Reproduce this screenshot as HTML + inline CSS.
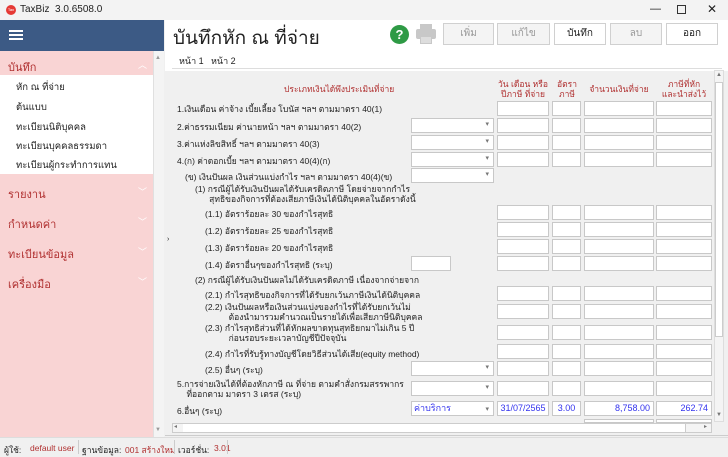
<!DOCTYPE html>
<html><head><meta charset="utf-8"><style>
*{box-sizing:border-box;margin:0;padding:0}
body{width:728px;height:457px;overflow:hidden;background:#f0f0f0;font-family:"Liberation Sans","DejaVu Sans",sans-serif;font-size:9px;color:#222;position:relative}
.a{position:absolute;white-space:nowrap}
.l{font-size:8.5px}
.in{position:absolute;height:15px;background:#fff;border:1px solid #c8c8c8}
.dd::after{content:"▾";position:absolute;right:4px;top:1px;font-size:7px;color:#777}
.hd{color:#b03030;text-align:center;font-size:8.5px;line-height:10px}
.btn{position:absolute;top:23px;height:22px;border:1px solid #d0d0d0;background:#f4f4f4;color:#999;text-align:center;line-height:20px;font-size:10px}
.side{position:absolute;left:16px;font-size:9.5px;color:#222}
.grp{position:absolute;left:8px;font-size:11px;color:#b03030}
.chev{position:absolute;left:138px;color:#fff;font-size:9px}
.blue{color:#3333ee}
</style></head><body>
<div class="a" style="left:0;top:0;width:728px;height:20px;background:#f3f3f3"></div>
<div class="a" style="left:6px;top:5px;width:10px;height:10px;border-radius:50%;background:#e53935;color:#fff;font-size:4px;line-height:10px;text-align:center">Tax</div>
<div class="a" style="left:20px;top:4px;font-size:10px">TaxBiz&nbsp; 3.0.6508.0</div>
<div class="a" style="left:650px;top:3px;font-size:11px">—</div>
<div class="a" style="left:677px;top:5px;width:9px;height:9px;border:1px solid #333"></div>
<div class="a" style="left:707px;top:2px;font-size:12px">✕</div>
<div class="a" style="left:0;top:20px;width:164px;height:31px;background:#3c5a85"></div>
<div class="a" style="left:9px;top:30px;width:14px;height:2px;background:#fff;box-shadow:0 4px 0 #fff,0 8px 0 #fff"></div>
<div class="a" style="left:0;top:51px;width:153px;height:386px;background:#f9d4d4"></div>
<div class="a" style="left:153px;top:51px;width:11px;height:386px;background:#f4f4f4;border-left:1px solid #e0e0e0"></div>
<div class="a" style="left:155px;top:55px;font-size:6px;color:#999">▲</div>
<div class="a" style="left:155px;top:427px;font-size:6px;color:#999">▼</div>
<div class="a" style="left:0;top:75px;width:153px;height:99px;background:#fff"></div>
<div class="grp a" style="top:58px">บันทึก</div><div class="chev a" style="top:58px">︿</div>
<div class="side a" style="top:80px">หัก ณ ที่จ่าย</div>
<div class="side a" style="top:100px">ต้นแบบ</div>
<div class="side a" style="top:120px">ทะเบียนนิติบุคคล</div>
<div class="side a" style="top:139px">ทะเบียนบุคคลธรรมดา</div>
<div class="side a" style="top:158px">ทะเบียนผู้กระทำการแทน</div>
<div class="grp a" style="top:185px">รายงาน</div><div class="chev a" style="top:185px">﹀</div>
<div class="grp a" style="top:215px">กำหนดค่า</div><div class="chev a" style="top:215px">﹀</div>
<div class="grp a" style="top:245px">ทะเบียนข้อมูล</div><div class="chev a" style="top:245px">﹀</div>
<div class="grp a" style="top:275px">เครื่องมือ</div><div class="chev a" style="top:275px">﹀</div>
<div class="a" style="left:165px;top:20px;width:563px;height:31px;background:#fff"></div>
<div class="a" style="left:173px;top:23px;font-size:19px;color:#222">บันทึกหัก ณ ที่จ่าย</div>
<div class="a" style="left:390px;top:25px;width:19px;height:19px;border-radius:50%;background:#2e9a45;color:#fff;font-weight:bold;font-size:13px;text-align:center;line-height:19px">?</div>
<div class="a" style="left:420px;top:24px;width:12px;height:5px;background:#c8c8c8"></div>
<div class="a" style="left:416px;top:29px;width:20px;height:10px;background:#c8c8c8;border-radius:2px"></div>
<div class="a" style="left:420px;top:36px;width:12px;height:8px;background:#ddd;border:1px solid #c8c8c8"></div>
<div class="btn" style="left:443px;width:51px">เพิ่ม</div>
<div class="btn" style="left:497px;width:53px">แก้ไข</div>
<div class="btn" style="left:554px;width:52px;background:#fff;color:#222">บันทึก</div>
<div class="btn" style="left:610px;width:52px">ลบ</div>
<div class="btn" style="left:666px;width:52px;background:#fff;color:#222">ออก</div>
<div class="a" style="left:165px;top:51px;width:563px;height:20px;background:#fff"></div>
<div class="a" style="left:179px;top:54px">หน้า 1</div>
<div class="a" style="left:211px;top:54px">หน้า 2</div>
<div class="a" style="left:172px;top:68px;width:550px;height:1px;background:#ddd"></div>
<div class="a" style="left:167px;top:236px;font-size:7px">›</div>
<div class="a hd" style="left:284px;top:84px">ประเภทเงินได้พึงประเมินที่จ่าย</div>
<div class="a hd" style="left:496px;top:79px;width:54px">วัน เดือน หรือ<br>ปีภาษี ที่จ่าย</div>
<div class="a hd" style="left:552px;top:79px;width:30px">อัตรา<br>ภาษี</div>
<div class="a hd" style="left:584px;top:84px;width:70px">จำนวนเงินที่จ่าย</div>
<div class="a hd" style="left:656px;top:79px;width:56px">ภาษีที่หัก<br>และนำส่งไว้</div>
<div class="a" style="left:714px;top:70px;width:10px;height:352px;background:#f4f4f4;border:1px solid #ddd"></div>
<div class="a" style="left:715px;top:82px;width:8px;height:255px;background:#fff;border:1px solid #ccc"></div>
<div class="a" style="left:716px;top:72px;font-size:6px;color:#777">▲</div>
<div class="a" style="left:716px;top:412px;font-size:6px;color:#777">▼</div>
<div class="a" style="left:172px;top:423px;width:540px;height:10px;background:#f4f4f4;border:1px solid #ccc"></div>
<div class="a" style="left:183px;top:424px;width:503px;height:8px;background:#fff;border-right:1px solid #ccc"></div>
<div class="a" style="left:174px;top:423px;font-size:6px;color:#777">◂</div>
<div class="a" style="left:704px;top:423px;font-size:6px;color:#777">▸</div>
<div class="a" style="left:165px;top:435px;width:563px;height:1px;background:#ccc"></div>

<div class="a l" style="left:177px;top:102px">1.เงินเดือน ค่าจ้าง เบี้ยเลี้ยง โบนัส ฯลฯ ตามมาตรา 40(1)</div>
<div class="a l" style="left:177px;top:120px">2.ค่าธรรมเนียม ค่านายหน้า ฯลฯ ตามมาตรา 40(2)</div>
<div class="a l" style="left:177px;top:137px">3.ค่าแห่งลิขสิทธิ์ ฯลฯ ตามมาตรา 40(3)</div>
<div class="a l" style="left:177px;top:154px">4.(ก) ค่าดอกเบี้ย ฯลฯ ตามมาตรา 40(4)(ก)</div>
<div class="a l" style="left:185px;top:170px">(ข) เงินปันผล เงินส่วนแบ่งกำไร ฯลฯ ตามมาตรา 40(4)(ข)</div>
<div class="a l" style="left:195px;top:184px;line-height:10px">(1) กรณีผู้ได้รับเงินปันผลได้รับเครดิตภาษี โดยจ่ายจากกำไร<br>&nbsp;&nbsp;&nbsp;&nbsp;&nbsp;&nbsp;สุทธิของกิจการที่ต้องเสียภาษีเงินได้นิติบุคคลในอัตราดังนี้</div>
<div class="a l" style="left:205px;top:207px">(1.1) อัตราร้อยละ 30 ของกำไรสุทธิ</div>
<div class="a l" style="left:205px;top:224px">(1.2) อัตราร้อยละ 25 ของกำไรสุทธิ</div>
<div class="a l" style="left:205px;top:241px">(1.3) อัตราร้อยละ 20 ของกำไรสุทธิ</div>
<div class="a l" style="left:205px;top:258px">(1.4) อัตราอื่นๆของกำไรสุทธิ (ระบุ)</div>
<div class="a l" style="left:195px;top:273px">(2) กรณีผู้ได้รับเงินปันผลไม่ได้รับเครดิตภาษี เนื่องจากจ่ายจาก</div>
<div class="a l" style="left:205px;top:288px">(2.1) กำไรสุทธิของกิจการที่ได้รับยกเว้นภาษีเงินได้นิติบุคคล</div>
<div class="a l" style="left:205px;top:302px;line-height:10px">(2.2) เงินปันผลหรือเงินส่วนแบ่งของกำไรที่ได้รับยกเว้นไม่<br>&nbsp;&nbsp;&nbsp;&nbsp;&nbsp;&nbsp;&nbsp;&nbsp;&nbsp;&nbsp;ต้องนำมารวมคำนวณเป็นรายได้เพื่อเสียภาษีนิติบุคคล</div>
<div class="a l" style="left:205px;top:323px;line-height:10px">(2.3) กำไรสุทธิส่วนที่ได้หักผลขาดทุนสุทธิยกมาไม่เกิน 5 ปี<br>&nbsp;&nbsp;&nbsp;&nbsp;&nbsp;&nbsp;&nbsp;&nbsp;&nbsp;&nbsp;ก่อนรอบระยะเวลาบัญชีปีปัจจุบัน</div>
<div class="a l" style="left:205px;top:347px">(2.4) กำไรที่รับรู้ทางบัญชีโดยวิธีส่วนได้เสีย(equity method)</div>
<div class="a l" style="left:205px;top:363px">(2.5) อื่นๆ (ระบุ)</div>
<div class="a l" style="left:177px;top:379px;line-height:10px">5.การจ่ายเงินได้ที่ต้องหักภาษี ณ ที่จ่าย ตามคำสั่งกรมสรรพากร<br>&nbsp;&nbsp;&nbsp;&nbsp;ที่ออกตาม มาตรา 3 เตรส (ระบุ)</div>
<div class="a l" style="left:177px;top:404px">6.อื่นๆ (ระบุ)</div>

<div class="in" style="left:497px;top:101px;width:52px"></div><div class="in" style="left:552px;top:101px;width:29px"></div><div class="in" style="left:584px;top:101px;width:70px"></div><div class="in" style="left:656px;top:101px;width:56px"></div>
<div class="in dd" style="left:411px;top:118px;width:83px"></div><div class="in" style="left:497px;top:118px;width:52px"></div><div class="in" style="left:552px;top:118px;width:29px"></div><div class="in" style="left:584px;top:118px;width:70px"></div><div class="in" style="left:656px;top:118px;width:56px"></div>
<div class="in dd" style="left:411px;top:135px;width:83px"></div><div class="in" style="left:497px;top:135px;width:52px"></div><div class="in" style="left:552px;top:135px;width:29px"></div><div class="in" style="left:584px;top:135px;width:70px"></div><div class="in" style="left:656px;top:135px;width:56px"></div>
<div class="in dd" style="left:411px;top:152px;width:83px"></div><div class="in" style="left:497px;top:152px;width:52px"></div><div class="in" style="left:552px;top:152px;width:29px"></div><div class="in" style="left:584px;top:152px;width:70px"></div><div class="in" style="left:656px;top:152px;width:56px"></div>
<div class="in dd" style="left:411px;top:168px;width:83px"></div>
<div class="in" style="left:497px;top:205px;width:52px"></div><div class="in" style="left:552px;top:205px;width:29px"></div><div class="in" style="left:584px;top:205px;width:70px"></div><div class="in" style="left:656px;top:205px;width:56px"></div>
<div class="in" style="left:497px;top:222px;width:52px"></div><div class="in" style="left:552px;top:222px;width:29px"></div><div class="in" style="left:584px;top:222px;width:70px"></div><div class="in" style="left:656px;top:222px;width:56px"></div>
<div class="in" style="left:497px;top:239px;width:52px"></div><div class="in" style="left:552px;top:239px;width:29px"></div><div class="in" style="left:584px;top:239px;width:70px"></div><div class="in" style="left:656px;top:239px;width:56px"></div>
<div class="in" style="left:411px;top:256px;width:40px"></div><div class="in" style="left:497px;top:256px;width:52px"></div><div class="in" style="left:552px;top:256px;width:29px"></div><div class="in" style="left:584px;top:256px;width:70px"></div><div class="in" style="left:656px;top:256px;width:56px"></div>
<div class="in" style="left:497px;top:286px;width:52px"></div><div class="in" style="left:552px;top:286px;width:29px"></div><div class="in" style="left:584px;top:286px;width:70px"></div><div class="in" style="left:656px;top:286px;width:56px"></div>
<div class="in" style="left:497px;top:304px;width:52px"></div><div class="in" style="left:552px;top:304px;width:29px"></div><div class="in" style="left:584px;top:304px;width:70px"></div><div class="in" style="left:656px;top:304px;width:56px"></div>
<div class="in" style="left:497px;top:325px;width:52px"></div><div class="in" style="left:552px;top:325px;width:29px"></div><div class="in" style="left:584px;top:325px;width:70px"></div><div class="in" style="left:656px;top:325px;width:56px"></div>
<div class="in" style="left:497px;top:344px;width:52px"></div><div class="in" style="left:552px;top:344px;width:29px"></div><div class="in" style="left:584px;top:344px;width:70px"></div><div class="in" style="left:656px;top:344px;width:56px"></div>
<div class="in dd" style="left:411px;top:361px;width:83px"></div><div class="in" style="left:497px;top:361px;width:52px"></div><div class="in" style="left:552px;top:361px;width:29px"></div><div class="in" style="left:584px;top:361px;width:70px"></div><div class="in" style="left:656px;top:361px;width:56px"></div>
<div class="in dd" style="left:411px;top:381px;width:83px"></div><div class="in" style="left:497px;top:381px;width:52px"></div><div class="in" style="left:552px;top:381px;width:29px"></div><div class="in" style="left:584px;top:381px;width:70px"></div><div class="in" style="left:656px;top:381px;width:56px"></div>
<div class="in dd blue" style="left:411px;top:401px;width:83px;padding-left:2px;line-height:13px">ค่าบริการ</div>
<div class="in blue" style="left:497px;top:401px;width:52px;text-align:center;line-height:13px">31/07/2565</div>
<div class="in blue" style="left:552px;top:401px;width:29px;text-align:center;line-height:13px">3.00</div>
<div class="in blue" style="left:584px;top:401px;width:70px;text-align:right;padding-right:3px;line-height:13px">8,758.00</div>
<div class="in blue" style="left:656px;top:401px;width:56px;text-align:right;padding-right:3px;line-height:13px">262.74</div>
<div class="in" style="left:584px;top:419px;width:70px;height:4px"></div><div class="in" style="left:656px;top:419px;width:56px;height:4px"></div>

<div class="a" style="left:0;top:437px;width:728px;height:20px;background:#f0f0f0;border-top:1px solid #ddd"></div>
<div class="a l" style="left:4px;top:443px">ผู้ใช้:</div>
<div class="a l" style="left:30px;top:443px;color:#b03030">default user</div>
<div class="a" style="left:78px;top:440px;width:1px;height:14px;background:#ccc"></div>
<div class="a l" style="left:82px;top:443px">ฐานข้อมูล:</div>
<div class="a l" style="left:125px;top:443px;color:#b03030">001 สร้างใหม่</div>
<div class="a" style="left:174px;top:440px;width:1px;height:14px;background:#ccc"></div>
<div class="a l" style="left:178px;top:443px">เวอร์ชั่น:</div>
<div class="a l" style="left:214px;top:443px;color:#b03030">3.01</div>
<div class="a" style="left:227px;top:440px;width:1px;height:14px;background:#ccc"></div>
</body></html>
